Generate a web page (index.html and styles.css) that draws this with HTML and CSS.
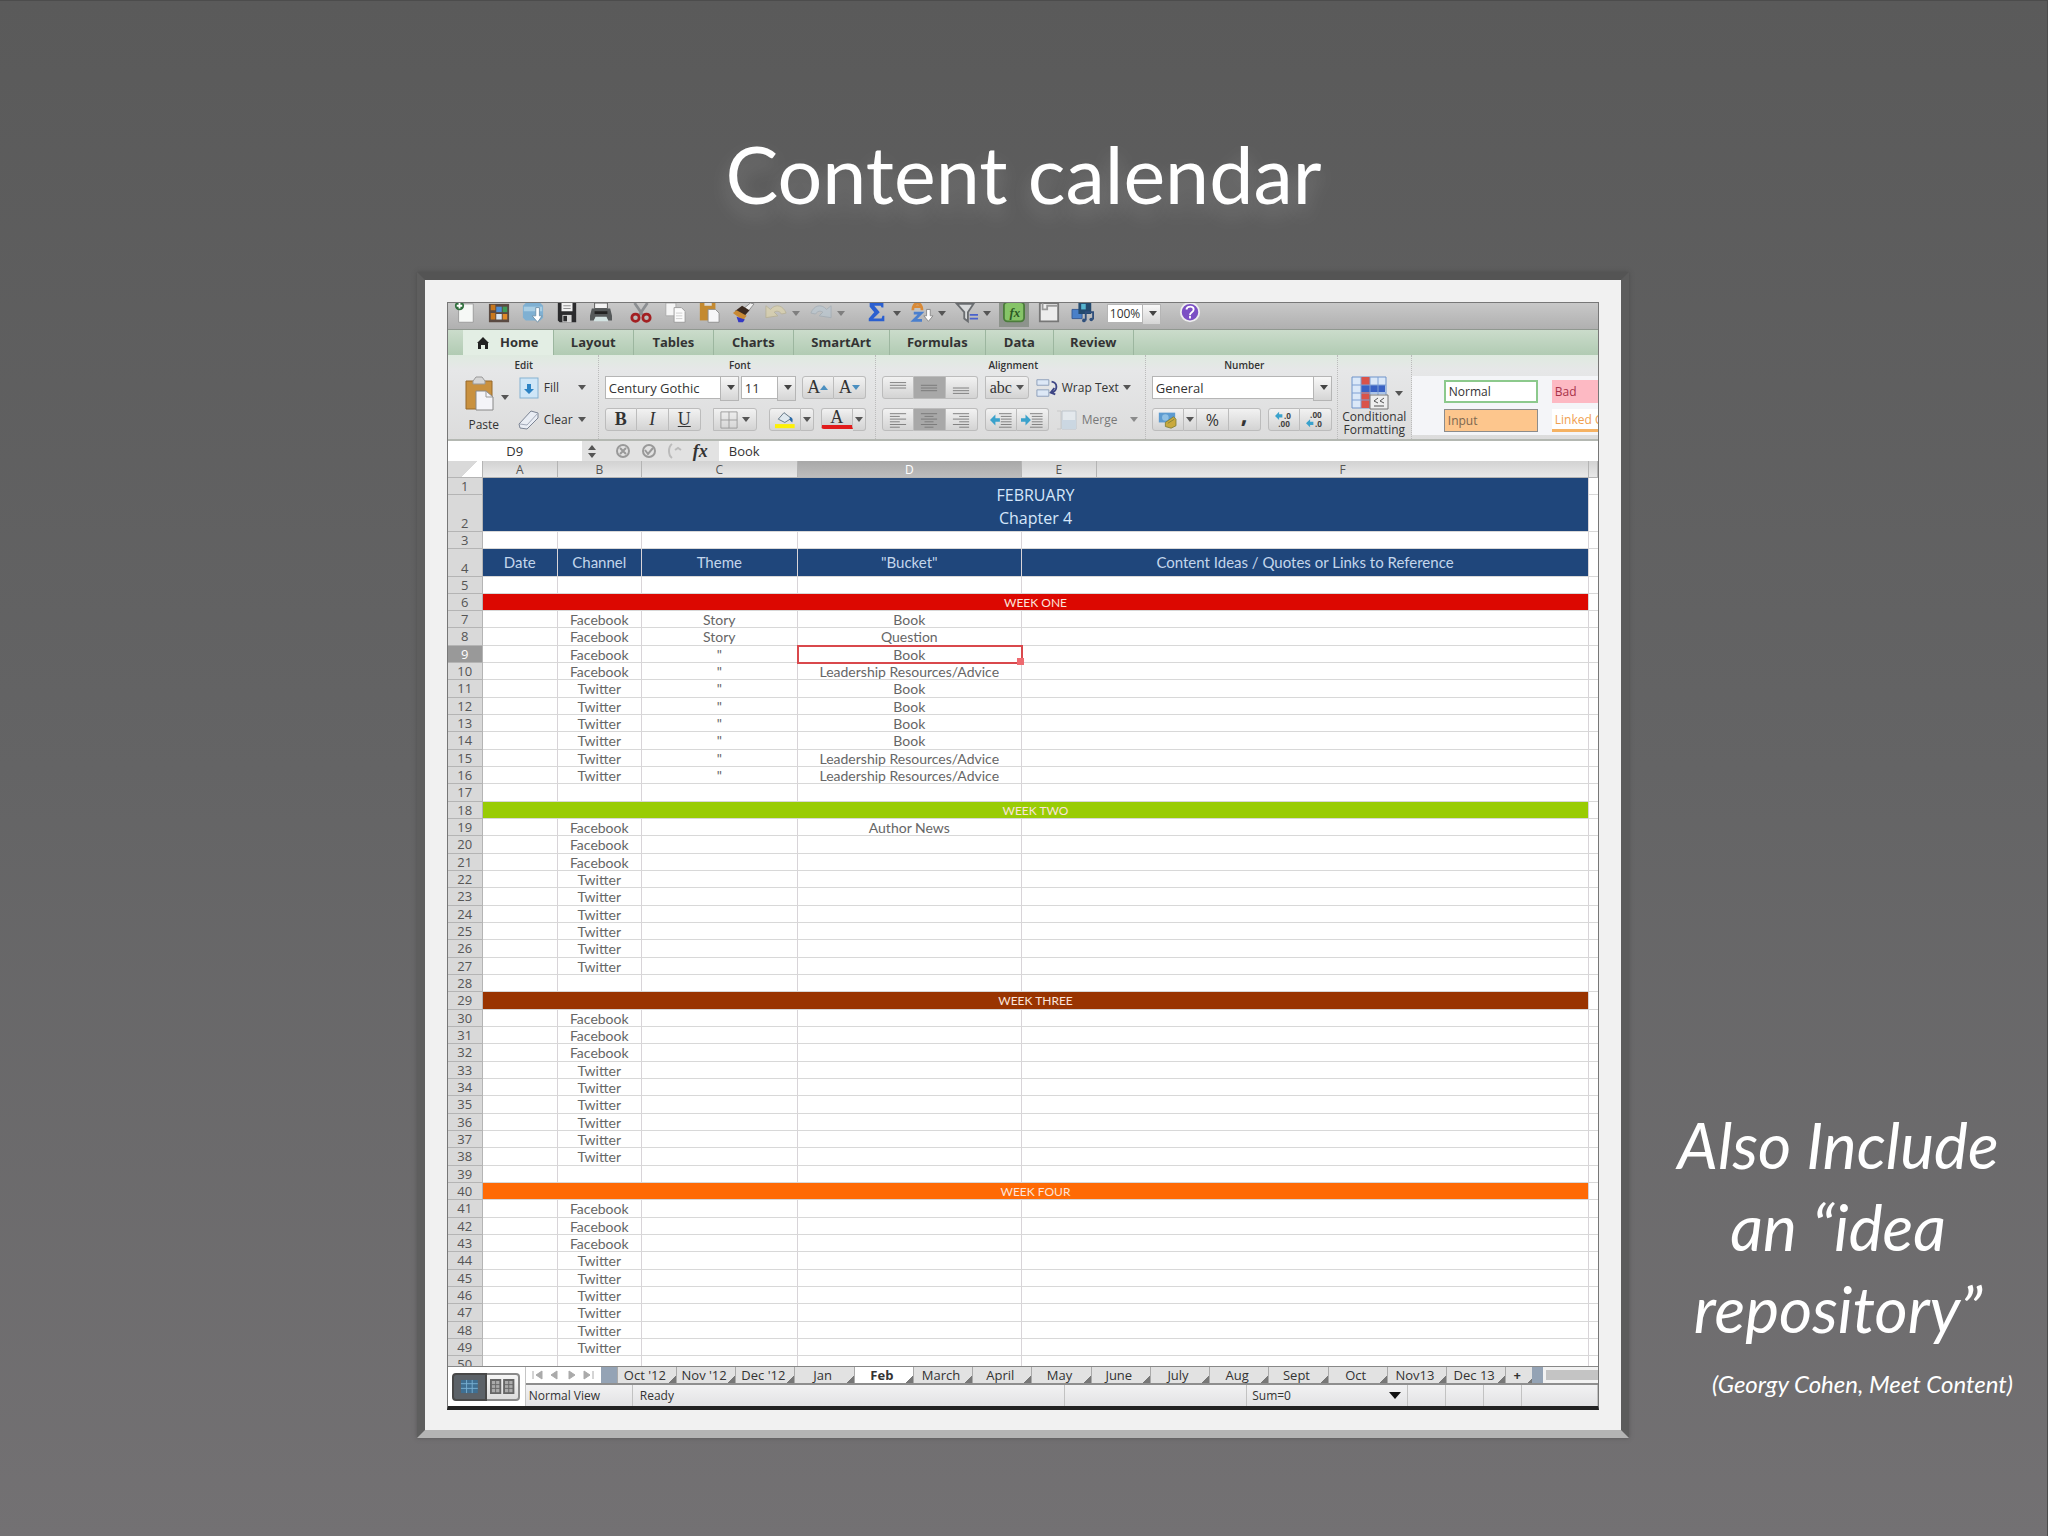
FILE: index.html
```html
<!DOCTYPE html>
<html lang="en">
<head>
  <meta charset="UTF-8" />
  <title>Content calendar</title>
  <meta name="viewport" content="width=device-width, initial-scale=1.0" />
  <link rel="stylesheet" href="styles.css">
</head>
<body>
  <main class="slide">
    <h1>Content calendar</h1>

    <div class="frame">
      <div class="app">

        <!-- Standard toolbar -->
        <div class="toolbar">
          <button class="tool" aria-label="New"><svg viewBox="0 0 24 24"><path d="M5 1h16v20H5z" fill="#f6f8f6" stroke="#999"/><circle cx="6" cy="3" r="5" fill="#2e6e3b"/><path d="M6 0v6M3 3h6" stroke="#fff" stroke-width="2"/></svg></button>
          <button class="tool" aria-label="Gallery"><svg viewBox="0 0 24 24"><path d="M1 1h22v20H1z" fill="#5a4a42"/><path d="M3 2h5v6H3zM3 11h5v7H3z" fill="#c8781e"/><path d="M9 4h6v6H9z" fill="#4d8fd6"/><path d="M16 4h5v6h-5z" fill="#3f9b58"/><path d="M9 12h6v6H9z" fill="#d8e6f4"/><path d="M16 12h5v6h-5z" fill="#e08a28"/></svg></button>
          <button class="tool" aria-label="Open"><svg viewBox="0 0 24 24"><path d="M1 3l3-3h16l3 3v13l-3 3H4l-3-3z" fill="#7fb0d2"/><path d="M2 4h20v5H2z" fill="#a9cee4"/><path d="M15 5v9h-4l6 7 5-7h-3V5z" fill="#fff" stroke="#6c90aa"/></svg></button>
          <button class="tool" aria-label="Save"><svg viewBox="0 0 24 24"><path d="M2 0h20v21H4l-2-2z" fill="#2b2b2d"/><path d="M6 0h12v9H6z" fill="#f1f1f1"/><path d="M8 3h8M8 6h8" stroke="#888"/><path d="M7 13h10v8H7z" fill="#d5d5d5"/><path d="M8 14h4v6H8z" fill="#2b2b2d"/></svg></button>
          <button class="tool" aria-label="Print"><svg viewBox="0 0 24 24"><path d="M5 0h14v6H5z" fill="#f4f4f4" stroke="#555"/><path d="M2 6h20l2 8v5h-4l-2-3H6l-2 3H0v-5z" fill="#55595a"/><path d="M5 9h14v3H5z" fill="#222"/><path d="M6 15h12l2 5H4z" fill="#d3e3e2"/></svg></button>
          <button class="tool tool-gap" aria-label="Cut"><svg viewBox="0 0 24 24"><path d="M5 0l9 13M19 0l-9 13" stroke="#8c8f92" stroke-width="3"/><circle cx="6" cy="16" r="4" fill="none" stroke="#a31f22" stroke-width="3"/><circle cx="18" cy="16" r="4" fill="none" stroke="#a31f22" stroke-width="3"/></svg></button>
          <button class="tool" aria-label="Copy"><svg viewBox="0 0 24 24"><path d="M2 0h11v14H2z" fill="#f5f5f5" stroke="#aaa"/><path d="M11 5h8l4 4v12H11z" fill="#fbfbfb" stroke="#999"/><path d="M13 11h7M13 14h7M13 17h7" stroke="#ccc"/></svg></button>
          <button class="tool" aria-label="Paste from clipboard"><svg viewBox="0 0 24 24"><path d="M2 0h17v19H2z" fill="#c48a30"/><path d="M7 0h8v3H7z" fill="#ddd"/><path d="M11 7h8l4 4v10H11z" fill="#f6f6f8" stroke="#8d8d8d"/></svg></button>
          <button class="tool" aria-label="Format painter"><svg viewBox="0 0 24 24"><path d="M14 5l6-5 4 1-7 9z" fill="#f0f0f0" stroke="#888"/><path d="M3 9l8-6 8 5-6 7z" fill="#3b2a20"/><path d="M1 11l4-3 11 6-4 5z" fill="#c98a35"/><path d="M5 15l9 3-2 3H7z" fill="#3438c4"/></svg></button>
          <button class="tool split faded" aria-label="Undo"><svg viewBox="0 0 24 24"><path d="M1 16V3l5 4c6-7 14-4 17 4l-5 1c-2-3-5-4-8-2l4 4z" fill="#e2d7a8" stroke="#b5ab82"/></svg><i class="caret"></i></button>
          <button class="tool split faded" aria-label="Redo"><svg viewBox="0 0 24 24"><path d="M23 16V3l-5 4C12 0 4 3 1 11l5 1c2-3 5-4 8-2l-4 4z" fill="#b9c8d3" stroke="#97a5b0"/></svg><i class="caret"></i></button>
          <button class="tool split split-gap" aria-label="AutoSum"><svg viewBox="0 0 24 24"><path d="M4 0h15v5h-2l-1-2H9l6 7-7 7h9l1-3h2v6H3v-3l6-7-5-6z" fill="#2a5fd0"/></svg><i class="caret"></i></button>
          <button class="tool split" aria-label="Sort"><svg viewBox="0 0 24 24"><path d="M2 8c0-10 10-10 10 0M3 4h8" fill="none" stroke="#d98a37" stroke-width="3"/><path d="M3 11h8l-8 8h9" fill="none" stroke="#4a7fce" stroke-width="3"/><path d="M17 7v7h-3l5 6 5-6h-3V7z" fill="#fff" stroke="#888"/></svg><i class="caret"></i></button>
          <button class="tool split" aria-label="Filter"><svg viewBox="0 0 24 24"><path d="M1 1h18l-6 9v10l-4-3v-7z" fill="#d9dbdc" stroke="#6a6d70" stroke-width="2"/><path d="M15 13h9M15 17h9" stroke="#4a62cc" stroke-width="2"/></svg><i class="caret"></i></button>
          <button class="tool tool-on" aria-label="Toolbox"><svg viewBox="0 0 24 24"><rect x="1" y="-1" width="22" height="21" rx="4" fill="#86c468" stroke="#4c7c3c" stroke-width="2"/><text x="7" y="15" class="fx-glyph">fx</text></svg></button>
          <button class="tool" aria-label="Toolbox window"><svg viewBox="0 0 24 24"><path d="M2 0h20v20H2z" fill="#ececec" stroke="#777" stroke-width="2"/><path d="M5 0v7h5V3h11" fill="none" stroke="#999" stroke-width="2"/></svg></button>
          <button class="tool" aria-label="Media browser"><svg viewBox="0 0 24 24"><path d="M0 7h11v10H0z" fill="#4a80c8" stroke="#355a94"/><path d="M7 0h14v12H7z" fill="#244a6e"/><path d="M10 1h5v6h-5z" fill="#56b5cf"/><path d="M15 19v-9h8v8" fill="none" stroke="#2f4f7c" stroke-width="2"/><circle cx="13" cy="19" r="2" fill="#2f4f7c"/><circle cx="21" cy="18" r="2" fill="#2f4f7c"/></svg></button>
          <span class="combo combo-zoom"><select aria-label="Zoom"><option>100%</option></select></span>
          <button class="tool help" aria-label="Help"><svg viewBox="0 0 24 24"><circle cx="12" cy="10" r="10" fill="#7b4fc4" stroke="#eee" stroke-width="2"/><path d="M8 7c1-4 8-4 8 0 0 3-4 3-4 6M12 14v3" fill="none" stroke="#fff" stroke-width="2"/></svg></button>
        </div>

        <!-- Ribbon tabs -->
        <nav class="tabs">
          <a href="#home" class="tab tab-active tab-home"><svg viewBox="0 0 12 12"><path d="M6 0l6 6h-1v6H8V8H4v4H1V6H0z" fill="#222"/></svg>Home</a>
          <a href="#layout" class="tab tab-m">Layout</a>
          <a href="#tables" class="tab tab-m">Tables</a>
          <a href="#charts" class="tab tab-m">Charts</a>
          <a href="#smartart" class="tab tab-l">SmartArt</a>
          <a href="#formulas" class="tab tab-l">Formulas</a>
          <a href="#data" class="tab tab-s">Data</a>
          <a href="#review" class="tab tab-m">Review</a>
        </nav>

        <!-- Ribbon -->
        <div class="ribbon">
          <section class="group group-edit">
            <h2>Edit</h2>
            <div class="group-cols">
              <button class="big">
                <span class="big-icon"><svg class="icon-paste" viewBox="0 0 30 36"><path d="M1 5h26v28H1z" fill="#c9913f" stroke="#96692a"/><path d="M8 5l3-4h6l3 4v3H8z" fill="#d6d6d6" stroke="#999"/><path d="M11 15h10l7 6v13H11z" fill="#f4f4f8" stroke="#888"/><path d="M21 15v6h7" fill="none" stroke="#999"/></svg><i class="caret"></i></span>
                Paste
              </button>
              <div class="rows">
                <button class="plain"><svg viewBox="0 0 22 22"><rect x="2" y="1" width="18" height="20" fill="#cfe6f7" stroke="#85b2d2"/><path d="M9 7h4v5h3l-5 5-5-5h3z" fill="#2d83c4"/></svg><span class="word">Fill</span><i class="caret"></i></button>
                <button class="plain"><svg viewBox="0 0 22 22"><path d="M1 15L13 2l7 2v5L9 20l-7-1z" fill="#e9edf4" stroke="#7c8494"/><path d="M2 15l7 1L20 4" fill="none" stroke="#a2a9b8"/></svg><span class="word">Clear</span><i class="caret"></i></button>
              </div>
            </div>
          </section>

          <section class="group group-font">
            <h2>Font</h2>
            <div class="rows">
              <div class="row">
                <span class="combo combo-font"><select aria-label="Font"><option>Century Gothic</option></select></span>
                <span class="combo combo-size"><select aria-label="Font size"><option>11</option></select></span>
                <span class="set">
                  <button class="serif" aria-label="Grow font">A<i class="caret caret-up caret-grow"></i></button>
                  <button class="serif" aria-label="Shrink font">A<i class="caret caret-blue"></i></button>
                </span>
              </div>
              <div class="row">
                <span class="set">
                  <button class="serif"><b>B</b></button>
                  <button class="serif"><em>I</em></button>
                  <button class="serif"><u>U</u></button>
                </span>
                <span class="set push-m">
                  <button class="wide" aria-label="Borders"><svg viewBox="0 0 20 20"><path d="M1 1h18v18H1zM10 1v18M1 10h18" fill="none" stroke="#999"/></svg><i class="caret"></i></button>
                </span>
                <span class="set push-m">
                  <button aria-label="Fill color"><svg viewBox="0 0 24 22"><path d="M4 10l7-8 9 7-8 5z" fill="#dfe8ee" stroke="#4f6375"/><path d="M18 7c4 1 4 4 3 7l-3-3z" fill="#2a6aa8"/><path d="M0 16h24v5H0z" fill="#fdf006"/></svg></button>
                  <button class="thin" aria-label="Fill color list"><i class="caret"></i></button>
                </span>
                <span class="set push-s">
                  <button aria-label="Font color" class="serif font-color">A</button>
                  <button class="thin" aria-label="Font color list"><i class="caret"></i></button>
                </span>
              </div>
            </div>
          </section>

          <section class="group group-align">
            <h2>Alignment</h2>
            <div class="rows">
              <div class="row">
                <span class="set">
                  <button aria-label="Align top"><svg viewBox="0 0 20 20"><path d="M1 4h18M1 7h18M1 10h18" stroke="#777"/></svg></button>
                  <button aria-label="Align middle" class="on"><svg viewBox="0 0 20 20"><path d="M1 7h18M1 10h18M1 13h18" stroke="#777"/></svg></button>
                  <button aria-label="Align bottom"><svg viewBox="0 0 20 20"><path d="M1 10h18M1 13h18M1 16h18" stroke="#777"/></svg></button>
                </span>
                <span class="set push-s"><button class="wide serif abc">abc<i class="caret"></i></button></span>
                <button class="plain push-s"><svg viewBox="0 0 24 22"><path d="M1 2h13v6H1zM1 13h13v7H1z" fill="#dde8f6" stroke="#8a9cb8"/><path d="M17 4c7 1 7 10 0 12M20 11l-4 5 5 2" fill="none" stroke="#3d4585" stroke-width="2"/></svg>Wrap Text<i class="caret"></i></button>
              </div>
              <div class="row">
                <span class="set">
                  <button aria-label="Align left"><svg viewBox="0 0 20 20"><path d="M1 3h18M1 6h11M1 9h18M1 12h11M1 15h18M1 18h11" stroke="#777"/></svg></button>
                  <button aria-label="Center" class="on"><svg viewBox="0 0 20 20"><path d="M1 3h18M5 6h10M1 9h18M5 12h10M1 15h18M5 18h10" stroke="#777"/></svg></button>
                  <button aria-label="Align right"><svg viewBox="0 0 20 20"><path d="M1 3h18M8 6h11M1 9h18M8 12h11M1 15h18M8 18h11" stroke="#777"/></svg></button>
                </span>
                <span class="set push-s">
                  <button aria-label="Decrease indent"><svg viewBox="0 0 24 20"><path d="M10 3h14M12 6h12M12 9h12M12 12h12M12 15h12M10 18h14" stroke="#777"/><path d="M0 10l6-6v4h5v4H6v4z" fill="#3aa2cc"/></svg></button>
                  <button aria-label="Increase indent"><svg viewBox="0 0 24 20"><path d="M10 3h14M12 6h12M12 9h12M12 12h12M12 15h12M10 18h14" stroke="#777"/><path d="M11 10L5 4v4H0v4h5v4z" fill="#3aa2cc"/></svg></button>
                </span>
                <button class="plain faded push-s"><svg viewBox="0 0 22 22"><path d="M1 2h4v18H1" fill="none" stroke="#bbb"/><path d="M6 2h14v18H6z" fill="#e6eef5" stroke="#a9b6c2"/><path d="M6 11h14v9H6z" fill="#bfd3e4"/></svg><span class="word word-merge">Merge</span><i class="caret"></i></button>
              </div>
            </div>
          </section>

          <section class="group group-number">
            <h2>Number</h2>
            <div class="rows">
              <div class="row">
                <span class="combo combo-number"><select aria-label="Number format"><option>General</option></select></span>
              </div>
              <div class="row">
                <span class="set">
                  <button aria-label="Currency"><svg viewBox="0 0 24 22"><path d="M1 2h20v12H1z" fill="#5d9bd0"/><circle cx="9" cy="8" r="4" fill="#8fc0e4"/><path d="M9 14l10-7 3 3v8l-6 3-7-2z" fill="#c9a93d" stroke="#7c7c34"/><path d="M12 15l8-5" stroke="#7c7c34"/></svg></button>
                  <button class="thin" aria-label="Currency list"><i class="caret"></i></button>
                  <button class="percent">%</button>
                  <button class="comma" aria-label="Comma style">,</button>
                </span>
                <span class="set push-s">
                  <button aria-label="Increase decimal"><svg viewBox="0 0 22 22"><path d="M0 6l5-5v3h4v4H5v3z" fill="#3aa2cc"/><text x="11" y="10">.0</text><text x="4" y="20">.00</text></svg></button>
                  <button aria-label="Decrease decimal"><svg viewBox="0 0 22 22"><path d="M0 15l5-5v3h4v4H5v3z" fill="#3aa2cc"/><text x="5" y="9">.00</text><text x="11" y="20">.0</text></svg></button>
                </span>
              </div>
            </div>
          </section>

          <section class="group group-format">
            <button class="big">
              <span class="big-icon"><svg class="icon-cond" viewBox="0 0 38 34"><path d="M1 1h34v31H1z" fill="#dbe8f8" stroke="#6e93c9"/><path d="M10 1h9v31h-9z" fill="#d9534a"/><path d="M10 9h24v7H10z" fill="#3a62c4"/><path d="M1 9h34M1 17h34M1 24h34M10 1v31M19 1v31M27 1v31" stroke="#7fa0d4"/><path d="M19 19h18v14H19z" fill="#eee" stroke="#777"/><path d="M27 22l-4 3 4 2M33 22l-4 3 4 2M23 30h10" fill="none" stroke="#555"/></svg><i class="caret"></i></span>
              Conditional<br>Formatting
            </button>
          </section>

          <section class="styles">
            <button class="style style-normal">Normal</button>
            <button class="style style-bad">Bad</button>
            <button class="style style-input">Input</button>
            <button class="style style-linked">Linked Cell</button>
          </section>
        </div>

        <!-- Formula bar -->
        <div class="formula-bar">
          <input class="name-box" aria-label="Name box" value="D9">
          <span class="stepper"><i class="caret caret-up"></i><i class="caret"></i></span>
          <span class="formula-tools">
            <svg viewBox="0 0 16 16"><circle cx="8" cy="8" r="6" fill="none" stroke="#999" stroke-width="2"/><path d="M5 5l6 6M11 5l-6 6" stroke="#999" stroke-width="2"/></svg>
            <svg viewBox="0 0 16 16"><circle cx="8" cy="8" r="6" fill="none" stroke="#999" stroke-width="2"/><path d="M4 7l3 4 5-6" fill="none" stroke="#999" stroke-width="2"/></svg>
            <svg viewBox="0 0 16 16"><path d="M5 1C1 4 1 12 5 15M8 7l3-2 3 2" fill="none" stroke="#bbb" stroke-width="2"/></svg>
            <span class="fx">fx</span>
          </span>
          <input class="formula" aria-label="Formula" value="Book">
        </div>

        <!-- Worksheet -->
        <div class="sheet">
          <table>
            <colgroup>
              <col class="col-n"><col class="col-a"><col class="col-b"><col class="col-c"><col class="col-d"><col class="col-e"><col class="col-f"><col class="col-g">
            </colgroup>
            <thead>
              <tr><th class="corner"></th><th>A</th><th>B</th><th>C</th><th class="sel">D</th><th>E</th><th>F</th><th></th></tr>
            </thead>
            <tbody class="intro">
              <tr><th>1</th><td colspan="6" rowspan="2" class="month">FEBRUARY<br>Chapter 4</td><td></td></tr>
              <tr class="tall"><th>2</th><td></td></tr>
              <tr><th>3</th><td></td><td></td><td></td><td></td><td colspan="2"></td><td></td></tr>
              <tr class="heads"><th>4</th><td>Date</td><td>Channel</td><td>Theme</td><td>"Bucket"</td><td colspan="2">Content Ideas / Quotes or Links to Reference</td><td></td></tr>
              <tr><th>5</th><td></td><td></td><td></td><td></td><td colspan="2"></td><td></td></tr>
            </tbody>
            <tbody class="weeks">
              <tr class="week week-one"><th>6</th><td colspan="6">WEEK ONE</td><td></td></tr>
              <tr><th>7</th><td></td><td>Facebook</td><td>Story</td><td>Book</td><td colspan="2"></td><td></td></tr>
              <tr><th>8</th><td></td><td>Facebook</td><td>Story</td><td>Question</td><td colspan="2"></td><td></td></tr>
              <tr><th class="sel">9</th><td></td><td>Facebook</td><td>"</td><td class="cursor">Book</td><td colspan="2"></td><td></td></tr>
              <tr><th>10</th><td></td><td>Facebook</td><td>"</td><td>Leadership Resources/Advice</td><td colspan="2"></td><td></td></tr>
              <tr><th>11</th><td></td><td>Twitter</td><td>"</td><td>Book</td><td colspan="2"></td><td></td></tr>
              <tr><th>12</th><td></td><td>Twitter</td><td>"</td><td>Book</td><td colspan="2"></td><td></td></tr>
              <tr><th>13</th><td></td><td>Twitter</td><td>"</td><td>Book</td><td colspan="2"></td><td></td></tr>
              <tr><th>14</th><td></td><td>Twitter</td><td>"</td><td>Book</td><td colspan="2"></td><td></td></tr>
              <tr><th>15</th><td></td><td>Twitter</td><td>"</td><td>Leadership Resources/Advice</td><td colspan="2"></td><td></td></tr>
              <tr><th>16</th><td></td><td>Twitter</td><td>"</td><td>Leadership Resources/Advice</td><td colspan="2"></td><td></td></tr>
              <tr><th>17</th><td></td><td></td><td></td><td></td><td colspan="2"></td><td></td></tr>
              <tr class="week week-two"><th>18</th><td colspan="6">WEEK TWO</td><td></td></tr>
              <tr><th>19</th><td></td><td>Facebook</td><td></td><td>Author News</td><td colspan="2"></td><td></td></tr>
              <tr><th>20</th><td></td><td>Facebook</td><td></td><td></td><td colspan="2"></td><td></td></tr>
              <tr><th>21</th><td></td><td>Facebook</td><td></td><td></td><td colspan="2"></td><td></td></tr>
              <tr><th>22</th><td></td><td>Twitter</td><td></td><td></td><td colspan="2"></td><td></td></tr>
              <tr><th>23</th><td></td><td>Twitter</td><td></td><td></td><td colspan="2"></td><td></td></tr>
              <tr><th>24</th><td></td><td>Twitter</td><td></td><td></td><td colspan="2"></td><td></td></tr>
              <tr><th>25</th><td></td><td>Twitter</td><td></td><td></td><td colspan="2"></td><td></td></tr>
              <tr><th>26</th><td></td><td>Twitter</td><td></td><td></td><td colspan="2"></td><td></td></tr>
              <tr><th>27</th><td></td><td>Twitter</td><td></td><td></td><td colspan="2"></td><td></td></tr>
              <tr><th>28</th><td></td><td></td><td></td><td></td><td colspan="2"></td><td></td></tr>
              <tr class="week week-three"><th>29</th><td colspan="6">WEEK THREE</td><td></td></tr>
              <tr><th>30</th><td></td><td>Facebook</td><td></td><td></td><td colspan="2"></td><td></td></tr>
              <tr><th>31</th><td></td><td>Facebook</td><td></td><td></td><td colspan="2"></td><td></td></tr>
              <tr><th>32</th><td></td><td>Facebook</td><td></td><td></td><td colspan="2"></td><td></td></tr>
              <tr><th>33</th><td></td><td>Twitter</td><td></td><td></td><td colspan="2"></td><td></td></tr>
              <tr><th>34</th><td></td><td>Twitter</td><td></td><td></td><td colspan="2"></td><td></td></tr>
              <tr><th>35</th><td></td><td>Twitter</td><td></td><td></td><td colspan="2"></td><td></td></tr>
              <tr><th>36</th><td></td><td>Twitter</td><td></td><td></td><td colspan="2"></td><td></td></tr>
              <tr><th>37</th><td></td><td>Twitter</td><td></td><td></td><td colspan="2"></td><td></td></tr>
              <tr><th>38</th><td></td><td>Twitter</td><td></td><td></td><td colspan="2"></td><td></td></tr>
              <tr><th>39</th><td></td><td></td><td></td><td></td><td colspan="2"></td><td></td></tr>
              <tr class="week week-four"><th>40</th><td colspan="6">WEEK FOUR</td><td></td></tr>
              <tr><th>41</th><td></td><td>Facebook</td><td></td><td></td><td colspan="2"></td><td></td></tr>
              <tr><th>42</th><td></td><td>Facebook</td><td></td><td></td><td colspan="2"></td><td></td></tr>
              <tr><th>43</th><td></td><td>Facebook</td><td></td><td></td><td colspan="2"></td><td></td></tr>
              <tr><th>44</th><td></td><td>Twitter</td><td></td><td></td><td colspan="2"></td><td></td></tr>
              <tr><th>45</th><td></td><td>Twitter</td><td></td><td></td><td colspan="2"></td><td></td></tr>
              <tr><th>46</th><td></td><td>Twitter</td><td></td><td></td><td colspan="2"></td><td></td></tr>
              <tr><th>47</th><td></td><td>Twitter</td><td></td><td></td><td colspan="2"></td><td></td></tr>
              <tr><th>48</th><td></td><td>Twitter</td><td></td><td></td><td colspan="2"></td><td></td></tr>
              <tr><th>49</th><td></td><td>Twitter</td><td></td><td></td><td colspan="2"></td><td></td></tr>
              <tr><th>50</th><td></td><td></td><td></td><td></td><td colspan="2"></td><td></td></tr>
            </tbody>
          </table>
        </div>

        <!-- Sheet tabs and status bar -->
        <div class="bottom">
          <div class="views">
            <button class="view view-on" aria-label="Normal view"><svg viewBox="0 0 20 16"><path d="M1 1h18v14H1z" fill="#3f6f92"/><path d="M1 5h18M1 10h18M7 1v14M13 1v14" stroke="#79b0d2"/></svg></button>
            <button class="view" aria-label="Page layout view"><svg viewBox="0 0 26 16"><path d="M1 1h10v14H1zM15 1h10v14H15z" fill="#aaa" stroke="#666" stroke-width="2"/><path d="M1 6h10M1 10h10M6 1v14M15 6h10M15 10h10M20 1v14" stroke="#666"/></svg></button>
          </div>
          <div class="bars">
            <div class="sheet-tabs">
              <span class="arrows">
                <svg viewBox="0 0 64 10"><path d="M2 1v8M11 1L5 5l6 4zM26 1l-6 4 6 4zM38 1l6 4-6 4zM53 1l6 4-6 4zM62 1v8" fill="#aaa" stroke="#aaa"/></svg>
              </span>
              <a href="#oct12">Oct '12</a>
              <a href="#nov12">Nov '12</a>
              <a href="#dec12">Dec '12</a>
              <a href="#jan">Jan</a>
              <a href="#feb" class="current">Feb</a>
              <a href="#march">March</a>
              <a href="#april">April</a>
              <a href="#may">May</a>
              <a href="#june">June</a>
              <a href="#july">July</a>
              <a href="#aug">Aug</a>
              <a href="#sept">Sept</a>
              <a href="#oct">Oct</a>
              <a href="#nov13">Nov13</a>
              <a href="#dec13">Dec 13</a>
              <a href="#add" class="add">+</a>
              <span class="scroll"></span>
            </div>
            <div class="status">
              <span class="st-view">Normal View</span>
              <span class="st-ready">Ready</span>
              <span class="st-blank"></span>
              <span class="st-sum">Sum=0<i class="caret"></i></span>
              <span class="st-key"></span>
              <span class="st-key"></span>
              <span class="st-key"></span>
              <span class="st-end"></span>
            </div>
          </div>
        </div>

      </div>
    </div>

    <aside class="note">
      <p class="idea">Also Include an “idea repository”</p>
      <p class="credit">(Georgy Cohen, Meet Content)</p>
    </aside>
  </main>
</body>
</html>
```
FILE: styles.css
```css
* {
  box-sizing: border-box;
}
body {
  margin: 0;
  font-family: 'Open Sans', 'Noto Sans', sans-serif;
  font-size: 13px;
  color: #333;
}
h1, h2, p {
  margin: 0;
  font-weight: normal;
}
button, input, select {
  font: inherit;
  color: inherit;
  margin: 0;
  padding: 0;
  border: 0;
  background: none;
  border-radius: 0;
}
a {
  color: inherit;
  text-decoration: none;
}

/* Slide */
.slide {
  display: grid;
  grid-template-columns: 417fr minmax(0, 1213fr) 418fr;
  grid-template-rows: 271px auto 1fr;
  min-height: 100vh;
  background: linear-gradient(#5a5a5a, #646465 50%, #737173);
  border: 1px solid #4c4c4c;
  border-left: 0;
  border-bottom: 0;
}
h1 {
  grid-column: 1 / 4;
  padding-top: 119px;
  font-family: Lato, sans-serif;
  font-size: 79px;
  line-height: 108px;
  text-align: center;
  color: #fff;
  text-shadow: 0 10px 20px rgba(255, 255, 255, 0.2);
}
.frame {
  grid-column: 2;
  padding: 22px 22px 20px;
  background: #f1f1f1;
  border: 8px solid;
  border-color: #545454 #5c5c5c #b4b4b4 #5e5e5e;
  box-shadow: 0 0 4px rgba(60, 60, 60, 0.5);
}
.note {
  grid-column: 3;
  align-self: end;
  padding-bottom: 38px;
  font-family: Lato, sans-serif;
  font-style: italic;
  color: #fff;
}
.idea {
  padding: 0 36px;
  font-size: 64px;
  line-height: 82px;
  text-align: center;
}
.credit {
  padding: 18px 34px 0 0;
  font-size: 24px;
  line-height: 32px;
  text-align: right;
}

/* Spreadsheet window */
.app {
  background: #fff;
  border: 1px solid #777;
  border-bottom: 4px solid #222;
  overflow: hidden;
}
svg {
  display: block;
  flex: none;
  overflow: visible;
}
.caret {
  flex: none;
  border: 4px solid transparent;
  border-top: 5px solid #555;
  border-bottom: 0;
}
.caret-up {
  border-top: 0;
  border-bottom: 5px solid #555;
}
.caret-grow {
  border-bottom-color: #4b8fc0;
}
.caret-blue {
  border-top-color: #4b8fc0;
}

/* Toolbar */
.toolbar {
  display: flex;
  align-items: center;
  height: 27px;
  padding-bottom: 5px;
  overflow: hidden;
  background: linear-gradient(#c8c8c8, #b0b0b0);
  border-bottom: 1px solid #909890;
}
.tool {
  flex: none;
  display: flex;
  align-items: center;
  justify-content: center;
  width: 34px;
  height: 26px;
}
.tool svg {
  width: 22px;
  height: 22px;
}
.tool-gap {
  margin-left: 6px;
}
.split {
  width: 45px;
  gap: 5px;
}
.split-gap {
  margin-left: 11px;
}
.tool-on {
  width: 30px;
  margin: 0 3px;
  background: #8d938c;
}
.fx-glyph {
  font: italic bold 14px 'Liberation Serif', serif;
  fill: #2c5a24;
}
.faded {
  opacity: 0.6;
}
.help {
  margin-left: 12px;
}
.combo {
  position: relative;
  flex: none;
  display: flex;
  height: 23px;
}
.combo select {
  appearance: none;
  width: 100%;
  padding-left: 3px;
  background: #fff;
  border: 1px solid #b5b5b5;
}
.combo::before {
  content: "";
  position: absolute;
  top: 0;
  right: 0;
  width: 17px;
  height: 100%;
  background: linear-gradient(#f8f8f8, #d5d5d5);
  border: 1px solid #b5b5b5;
}
.combo::after {
  content: "";
  position: absolute;
  top: 9px;
  right: 4px;
  border: 4px solid transparent;
  border-top: 5px solid #444;
  border-bottom: 0;
}
.combo-zoom {
  width: 54px;
  height: 19px;
  margin-left: 7px;
  font-size: 12px;
}
.combo-zoom select {
  padding-left: 2px;
}
.combo-zoom::after {
  top: 7px;
}
.combo-font {
  width: 134px;
}
.combo-size {
  width: 55px;
  margin: 0 6px 0 2px;
}
.combo-number {
  width: 180px;
}

/* Ribbon tabs */
.tabs {
  display: flex;
  height: 25px;
  padding-left: 15px;
  line-height: 25px;
  font-weight: bold;
  text-align: center;
  background: linear-gradient(#cbdccb, #b1cbb3);
}
.tab {
  border-right: 1px solid #9cb69f;
}
.tab-s {
  width: 68px;
}
.tab-m {
  width: 80px;
}
.tab-l {
  width: 96px;
}
.tab-home {
  display: flex;
  align-items: center;
  justify-content: center;
  gap: 11px;
  width: 91px;
}
.tab-home svg {
  width: 12px;
  height: 12px;
}
.tab-active {
  background: #e3eee4;
}

/* Ribbon */
.ribbon {
  display: flex;
  height: 86px;
  background: linear-gradient(#dfeae0, #e6e7e8 15px, #dcdcdc);
  border-bottom: 2px solid #b4b8b2;
}
.group {
  flex: none;
  padding-left: 6px;
  border-right: 1px dotted #bbb;
}
.group h2 {
  height: 21px;
  font-size: 10px;
  line-height: 20px;
  font-weight: 600;
  text-align: center;
}
.group-edit {
  width: 151px;
  padding-left: 2px;
}
.group-font {
  width: 277px;
}
.group-align {
  width: 270px;
}
.group-number {
  width: 192px;
}
.group-format {
  width: 74px;
  padding: 21px 0 0;
}
.group-cols {
  display: flex;
}
.rows {
  display: grid;
  gap: 9px;
  align-content: start;
}
.row {
  display: flex;
}
.big {
  display: flex;
  flex-direction: column;
  align-items: center;
  flex: none;
  width: 68px;
  font-size: 12px;
  line-height: 13px;
}
.group-format .big {
  width: 73px;
}
.big-icon {
  display: flex;
  align-items: center;
  gap: 6px;
  padding-left: 6px;
}
.icon-paste {
  width: 30px;
  height: 36px;
  margin-bottom: 6px;
}
.icon-cond {
  width: 38px;
  height: 34px;
}
.plain {
  display: flex;
  align-items: center;
  gap: 4px;
  height: 23px;
  font-size: 12px;
}
.plain svg {
  width: 22px;
  height: 22px;
}
.word {
  min-width: 30px;
  text-align: left;
}
.word-merge {
  min-width: 44px;
}
.set {
  display: flex;
}
.set button {
  display: flex;
  align-items: center;
  justify-content: center;
  width: 32px;
  height: 23px;
  border: 1px solid #bcbcbc;
  border-left-width: 0;
  background: linear-gradient(#f2f2f2, #d3d3d3);
}
.set button:first-child {
  border-left-width: 1px;
  border-radius: 3px 0 0 3px;
}
.set button:last-child {
  border-radius: 0 3px 3px 0;
}
.set svg {
  height: 18px;
}
.set svg text {
  font: bold 10px 'Open Sans', sans-serif;
  fill: #444;
}
.set .wide {
  width: 44px;
  gap: 4px;
  border-radius: 3px;
}
.set .thin {
  width: 13px;
}
.set .on {
  background: #a8a8a8;
}
.push-s {
  margin-left: 7px;
}
.push-m {
  margin-left: 12px;
}
.serif {
  font-family: 'Liberation Serif', serif;
  font-size: 18px;
}
.set .abc {
  font-size: 16px;
}
.set .font-color {
  height: 21px;
  line-height: 14px;
  border-bottom: 4px solid #e11b1b;
}
.percent {
  font-size: 16px;
}
.set .comma {
  padding-bottom: 12px;
  font-size: 24px;
  font-weight: bold;
}
.styles {
  flex: 1;
  min-width: 0;
  display: grid;
  grid-template-columns: 94px 94px;
  grid-template-rows: 23px 23px;
  gap: 6px 14px;
  margin: 21px 0 4px;
  padding: 4px 0 0 32px;
  overflow: hidden;
  background: #f4f5f8;
}
.style {
  padding-left: 3px;
  font-size: 12px;
  text-align: left;
  white-space: nowrap;
}
.style-normal {
  background: #fff;
  border: 2px solid #8cc98c;
}
.style-bad {
  background: #fdb9c3;
  color: #a8324a;
}
.style-input {
  background: #fdc68d;
  border: 1px solid #8c8c8c;
  color: #7c6650;
}
.style-linked {
  background: #fff;
  border-bottom: 3px solid #f5b263;
  color: #f0a050;
}

/* Formula bar */
.formula-bar {
  display: flex;
  height: 20px;
  background: #e2e2e2;
}
.name-box {
  width: 134px;
  text-align: center;
  background: #fff;
}
.stepper {
  display: grid;
  align-content: center;
  justify-content: center;
  gap: 3px;
  width: 20px;
}
.formula-tools {
  display: flex;
  align-items: center;
  gap: 10px;
  width: 117px;
  padding-left: 13px;
}
.formula-tools svg {
  width: 16px;
  height: 16px;
}
.fx {
  font: italic bold 18px 'Liberation Serif', serif;
}
.formula {
  flex: 1;
  min-width: 0;
  padding-left: 10px;
  background: #fff;
}

/* Worksheet */
.sheet {
  height: 905px;
  overflow: hidden;
}
table {
  width: 100%;
  table-layout: fixed;
  border-collapse: separate;
  border-spacing: 0;
}
.col-n {
  width: 35px;
}
.col-a, .col-e {
  width: 75px;
}
.col-b {
  width: 84px;
}
.col-c {
  width: 156px;
}
.col-d {
  width: 224px;
}
.col-g {
  width: 9px;
}
th, td {
  height: 17px;
  padding: 0;
  font-size: 13px;
  line-height: 15px;
  text-align: center;
  white-space: nowrap;
  border-right: 1px solid #d8d4d8;
  border-bottom: 1px solid #d8d8d8;
}
th {
  font-weight: normal;
  color: #555;
  background: #d9d9d9;
  border-color: #b4b4b4;
}
td {
  font-family: Lato, sans-serif;
  font-size: 14px;
  color: #666;
}
td:last-child {
  border-right: 0;
}
thead th {
  background: linear-gradient(#d2d2d2, #e8e8e8);
  font-size: 12px;
}
thead .corner {
  background: linear-gradient(135deg, #d9d9d9 60%, #fff 60%);
}
th.sel {
  color: #fff;
  background: #999;
}
thead th.sel {
  background: linear-gradient(#a8a8a8, #bdbdbd);
}
.weeks tr:nth-child(3n) > * {
  height: 18px;
}
.tall > * {
  height: 37px;
}
.tall th, .heads th {
  vertical-align: bottom;
}
td.month {
  font-family: 'Open Sans', sans-serif;
  font-size: 16px;
  line-height: 23px;
  padding-top: 5px;
  color: #d5e6fa;
  background: #1f467b;
}
.heads > * {
  height: 28px;
}
.heads td:not(:last-child) {
  font-size: 15px;
  color: #c4d6ec;
  background: #1f467b;
}
.week td:not(:last-child) {
  font-size: 12px;
  color: #fbe4dc;
}
.week-one td:not(:last-child) {
  background: #dc0801;
}
.week-two td:not(:last-child) {
  background: #99cc05;
}
.week-three td:not(:last-child) {
  background: #993401;
}
.week-four td:not(:last-child) {
  background: #ff6a05;
}
.cursor {
  position: relative;
  outline: 2px solid #d9484c;
  outline-offset: -1px;
}
.cursor::after {
  content: "";
  position: absolute;
  right: -3px;
  bottom: -3px;
  width: 7px;
  height: 7px;
  background: #ee6a70;
}

/* Sheet tabs and status bar */
.bottom {
  display: flex;
  height: 40px;
  border-top: 1px solid #888;
}
.views {
  display: flex;
  align-items: center;
  flex: none;
  width: 78px;
  padding: 0 5px 0 4px;
  border-right: 1px solid #c5c5c5;
}
.view {
  display: flex;
  align-items: center;
  justify-content: center;
  flex: 1;
  height: 28px;
  background: linear-gradient(#f6f6f6, #dcdcdc);
  border: 2px solid #8a8a8a;
  border-left: 0;
  border-radius: 0 4px 4px 0;
}
.view-on {
  background: #5c6268;
  border: 2px solid #484848;
  border-radius: 4px 0 0 4px;
}
.view svg {
  height: 15px;
}
.bars {
  flex: 1;
  min-width: 0;
}
.sheet-tabs {
  display: flex;
  height: 18px;
  line-height: 17px;
  text-align: center;
  white-space: nowrap;
  background: #94a3b5;
  border-bottom: 2px solid #8e8e8e;
}
.arrows {
  flex: none;
  width: 75px;
  margin-right: 16px;
  padding: 3px 5px;
  background: #fff;
}
.arrows svg {
  width: 64px;
  height: 10px;
}
.sheet-tabs a {
  flex: 1 1 0;
  padding-right: 4px;
  background: linear-gradient(135deg, #e2e2e2 90%, #777 90%);
  border-left: 1px solid #aaa;
}
.sheet-tabs .current {
  font-weight: bold;
  background: linear-gradient(135deg, #fff 90%, #777 90%);
}
.sheet-tabs .add {
  flex: none;
  width: 27px;
  font-weight: bold;
}
.scroll {
  flex: none;
  width: 55px;
  margin-left: 11px;
  background: #c4c4c4;
  border: 3px solid #f2f2f2;
  border-right: 0;
}
.status {
  display: flex;
  height: 21px;
  font-size: 12px;
  line-height: 21px;
  background: linear-gradient(#f2f2f3, #e2e2e4);
}
.status span {
  border-right: 1px solid #c2c2c2;
}
.st-view {
  width: 107px;
  padding-left: 3px;
}
.st-ready {
  flex: 1;
  padding-left: 7px;
}
.st-blank {
  width: 182px;
}
.st-sum {
  display: flex;
  align-items: center;
  justify-content: space-between;
  width: 161px;
  padding: 0 6px 0 5px;
}
.st-key {
  width: 38px;
}
.st-sum .caret {
  border-width: 7px 6px 0;
  border-top-color: #111;
}
.st-end {
  width: 76px;
}
```
